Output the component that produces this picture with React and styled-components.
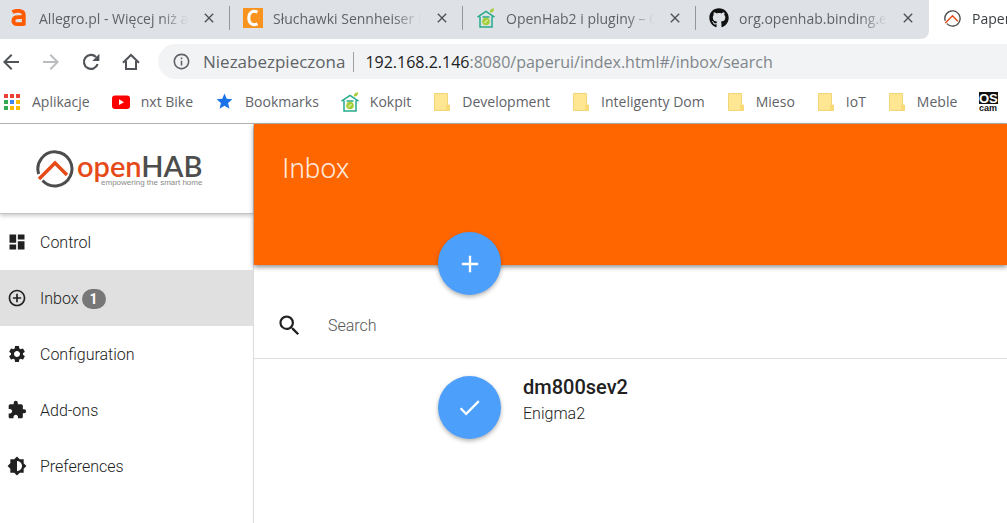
import React, { useState } from 'react'
import styled, { createGlobalStyle } from 'styled-components'
import {
    MdAdd, MdArrowBack, MdArrowForward, MdBrightness6, MdCheck, MdClose,
    MdControlPoint, MdDashboard, MdExtension, MdInfoOutline,
    MdSearch, MdSettings, MdStar
} from 'react-icons/md'
import { FaGithub } from 'react-icons/fa'

const GlobalStyle = createGlobalStyle`
    * {
        box-sizing: border-box;
    }
    body {
        margin: 0;
        background: #fff;
        font-family: Roboto, sans-serif;
        overflow: hidden;
    }
    button {
        border: 0;
        padding: 0;
        background: none;
        font: inherit;
        color: inherit;
    }
    a {
        color: inherit;
        text-decoration: none;
    }
    svg {
        display: block;
        flex: none;
    }
`

/* browser frame */

const Browser = styled.header`
    font-family: 'Open Sans', sans-serif;
    color: #5f6368;
    border-bottom: 1px solid #b4b5b7;
    overflow: hidden;
`

const TabStrip = styled.div`
    display: flex;
    height: 39px;
`

const IdleTabs = styled.div`
    display: flex;
    flex: none;
    background: #dee1e6;
    border-bottom-right-radius: 8px;
`

const Tab = styled.div`
    display: flex;
    align-items: center;
    flex: none;
    width: ${props => props.$first ? '230px' : '233px'};
    height: 36px;
    padding-left: ${props => props.$first ? '9px' : '13px'};
    gap: 10px;
    font-size: 14px;
    color: ${props => props.$active ? '#3c4043' : '#5f6368'};
`

const TabIcon = styled.span`
    display: flex;
    justify-content: center;
    flex: none;
    width: 20px;
`

const TabTitle = styled.span`
    flex: 1;
    min-width: 0;
    overflow: hidden;
    white-space: nowrap;
    mask-image: linear-gradient(to right, #000 80%, transparent 98%);
`

const TabClose = styled.button`
    flex: none;
    margin-right: 2px;
    color: #4d5156;
`

const TabDivider = styled.span`
    flex: none;
    width: 1px;
    height: 24px;
    background: ${props => props.$hidden ? 'transparent' : '#93969b'};
`

const Toolbar = styled.div`
    display: flex;
    align-items: center;
    height: 45px;
    padding-left: 1px;
`

const ToolButton = styled.button`
    display: flex;
    justify-content: center;
    flex: none;
    width: 40px;
    color: ${props => props.disabled ? '#babcbe' : '#505357'};

    &:first-child {
        width: 20px;
        margin-right: 10px;
    }
`

const AddressBar = styled.div`
    display: flex;
    align-items: center;
    flex: 1;
    height: 35px;
    margin-left: 7px;
    padding-left: 14px;
    border-radius: 18px 0 0 18px;
    background: #f1f3f4;
    font-size: 17px;
    white-space: nowrap;
`

const Security = styled.span`
    margin-left: 12px;
    padding-right: 8px;
    border-right: 1px solid #9aa0a6;
    line-height: 20px;
`

const Url = styled.div`
    margin-left: 11px;
    font-size: 16px;
    color: #80868b;
    outline: 0;
`

const Host = styled.span`
    color: #202124;
`

const Bookmarks = styled.nav`
    display: flex;
    gap: 22px;
    height: 39px;
    padding: 0 0 4px 3px;
`

const Bookmark = styled.a`
    display: flex;
    align-items: center;
    flex: none;
    gap: 11px;
    font-size: 14px;
    white-space: nowrap;
`

/* Paper UI page */

const Page = styled.div`
    display: flex;
    min-height: calc(100vh - 124px);
`

const Sidebar = styled.aside`
    flex: none;
    width: 254px;
    border-right: 1px solid #dcdcdc;
`

const Brand = styled.a`
    display: flex;
    align-items: center;
    gap: 3px;
    height: 90px;
    padding-left: 36px;
    border-bottom: 1px solid #c4c4c4;
    box-shadow: 0 2px 4px rgba(0, 0, 0, 0.2);
`

const BrandText = styled.span`
    display: flex;
    flex-direction: column;
    align-items: flex-end;
`

const BrandName = styled.span`
    font-family: Lato, sans-serif;
    font-size: 29px;
    font-weight: 600;
    line-height: 28px;
    color: #4d4d4d;
`

const BrandOpen = styled.span`
    color: #e64a19;
`

const Tagline = styled.span`
    font-family: 'Liberation Sans', sans-serif;
    font-size: 8px;
    line-height: 6px;
    color: #8a8a8a;
`

const Menu = styled.nav`
    display: flex;
    flex-direction: column;
`

const MenuItem = styled.a`
    display: flex;
    align-items: center;
    height: 56px;
    padding-left: 7px;
    gap: 13px;
    font-size: 16px;
    font-weight: 300;
    color: #212121;
    background: ${props => props.$active ? '#e0e0e0' : 'transparent'};
`

const MenuLabel = styled.span`
    display: flex;
    align-items: center;
    gap: 3px;
    padding-top: 1px;
`

const Badge = styled.span`
    min-width: 24px;
    border-radius: 10px;
    background: #777;
    color: #fff;
    font-size: 14px;
    font-weight: bold;
    line-height: 20px;
    text-align: center;
`

const Main = styled.main`
    flex: 1;
    min-width: 0;
`

const Banner = styled.div`
    position: relative;
    height: 141px;
    padding: 28px;
    background: #ff6600;
    box-shadow: 0 2px 5px rgba(0, 0, 0, 0.45);
`

const Title = styled.h1`
    margin: 0;
    font-size: 28px;
    font-weight: 300;
    line-height: 33px;
    color: rgba(255, 255, 255, 0.87);
`

const RoundButton = styled.button`
    display: flex;
    align-items: center;
    justify-content: center;
    flex: none;
    width: 63px;
    height: 63px;
    border-radius: 50%;
    background: #4d9ffc;
    color: #fff;
    box-shadow: 0 2px 4px rgba(0, 0, 0, 0.3);
`

const AddButton = styled(RoundButton)`
    position: absolute;
    left: 184px;
    bottom: -30px;
`

const SearchRow = styled.label`
    display: flex;
    align-items: center;
    height: 94px;
    padding: 28px 24px 0 22px;
    gap: 25px;
    border-bottom: 1px solid #e0e0e0;
    color: #212121;
`

const SearchInput = styled.input`
    flex: 1;
    min-width: 0;
    border: 0;
    padding: 0;
    outline: 0;
    font: 300 16px Roboto, sans-serif;

    &::placeholder {
        color: #555;
        opacity: 1;
    }
`

const Thing = styled.div`
    display: flex;
    padding: 17px 24px 17px 184px;
    gap: 22px;
`

const ThingName = styled.h2`
    margin: 0;
    font-size: 20px;
    font-weight: 500;
    line-height: 22px;
    color: #212121;
`

const ThingType = styled.p`
    margin: 4px 0 0;
    font-size: 16px;
    font-weight: 300;
    line-height: 24px;
    color: #212121;
`

const AllegroIcon = () => (
    <svg width="16" height="18" viewBox="0 0 16 18" fill="none" stroke="#ff5a00" strokeWidth="3.8">
        <path d="M1.5 3.2C5 1.2 12.8 0.8 12.8 6V16.5M12.8 8.2H7C1 8.2 1 15.2 6.2 15.2H12.8" />
    </svg>
)

const CeneoIcon = () => (
    <svg width="20" height="20" viewBox="0 0 20 20">
        <path fill="#f7931e" d="M0 0h20v20H0z" />
        <path fill="none" stroke="#fff" strokeWidth="3" d="M14.5 4.2C9 1.8 5.8 5 5.8 10s3.2 8.2 8.7 5.8" />
    </svg>
)

const SmartHomeIcon = () => (
    <svg width="18" height="20" viewBox="0 0 18 20" fill="none" stroke="#26a98b" strokeWidth="1.5">
        <path d="M.5 9.2L9 3.5l8.5 5.700M3 8.500v10.500h12V8.500M5.500 9h7" />
        <circle cx="9" cy="13.5" r="3.8" fill="#a6ce39" stroke="none" />
        <path stroke="#fff" strokeWidth="1" d="M7.5 15l3-3" />
        <path fill="#a6ce39" stroke="none" d="M13 4.500C12.500 2 14.500.500 17 .300c.200 2.500-1.200 4.500-4 4.200z" />
    </svg>
)

const HabMark = ({ size }) => (
    <svg width={size} height={size} viewBox="0 0 38 38" fill="none">
        <path stroke="#4d4d4d" strokeWidth="3" d="M2.700 24A17 17 0 1 1 6.500 30.500" />
        <path stroke="#e64a19" strokeWidth="3.4" d="M3 29L19 13l12 12" />
    </svg>
)

const ReloadIcon = () => (
    <svg width="18" height="18" viewBox="0 0 18 18">
        <path fill="none" stroke="currentColor" strokeWidth="2.2" d="M15.6 11.200A7 7 0 1 1 14 4" />
        <path fill="currentColor" d="M17.400.8v7.100h-7.100z" />
    </svg>
)

const HomeIcon = () => (
    <svg width="18" height="18" viewBox="0 0 18 18" fill="none" stroke="currentColor" strokeWidth="2">
        <path d="M1 9.800L9 2l8 7.800M4 8v8h10V8" />
    </svg>
)

const AppsIcon = () => {
    const colors = ['#ea4335', '#ea4335', '#ea4335', '#34a853', '#4285f4', '#fbbc05', '#34a853', '#fbbc05', '#fbbc05']
    return (
        <svg width="18" height="18" viewBox="0 0 18 18">
            {colors.map((color, i) => (
                <rect key={i} x={1 + (i % 3) * 6} y={1 + Math.floor(i / 3) * 6} width="4" height="4" fill={color} />
            ))}
        </svg>
    )
}

const YouTubeIcon = () => (
    <svg width="18" height="18" viewBox="0 0 18 18">
        <rect y="2.5" width="18" height="13.5" rx="3" fill="#f00" />
        <path fill="#fff" d="M7 6.300v5.800l5-2.900z" />
    </svg>
)

const FolderIcon = () => (
    <svg width="18" height="18" viewBox="0 0 18 18">
        <path fill="#ffe692" stroke="#f2d675" d="M1.500.5h13v11.500h2v5.500h-15z" />
        <path fill="#f9da74" d="M13 12h3.500v4l-1.500 1.500h-2z" />
    </svg>
)

const OscamIcon = () => (
    <svg width="19" height="20" viewBox="0 0 19 20" fontFamily="Liberation Sans, sans-serif" fontWeight="bold">
        <path fill="#111" d="M0 0h19v12H0z" />
        <text x="0" y="11" fontSize="13" fill="#fff">OS</text>
        <text x="0" y="19" fontSize="9" fill="#111">cam</text>
    </svg>
)

const tabs = [
    { title: 'Allegro.pl - Więcej niż aukcje', icon: <AllegroIcon /> },
    { title: 'Słuchawki Sennheiser PC', icon: <CeneoIcon /> },
    { title: 'OpenHab2 i pluginy – Gdzie', icon: <SmartHomeIcon /> },
    { title: 'org.openhab.binding.enigma2', icon: <FaGithub size={20} color="#111" /> }
]

const bookmarks = [
    { label: 'Aplikacje', icon: <AppsIcon /> },
    { label: 'nxt Bike', icon: <YouTubeIcon /> },
    { label: 'Bookmarks', icon: <MdStar size={19} color="#1a73e8" /> },
    { label: 'Kokpit', icon: <SmartHomeIcon /> },
    { label: 'Development', icon: <FolderIcon /> },
    { label: 'Inteligenty Dom', icon: <FolderIcon /> },
    { label: 'Mieso', icon: <FolderIcon /> },
    { label: 'IoT', icon: <FolderIcon /> },
    { label: 'Meble', icon: <FolderIcon /> },
    { label: '', icon: <OscamIcon /> }
]

const menu = [
    { label: 'Control', icon: MdDashboard },
    { label: 'Inbox', icon: MdControlPoint, count: 1 },
    { label: 'Configuration', icon: MdSettings },
    { label: 'Add-ons', icon: MdExtension },
    { label: 'Preferences', icon: MdBrightness6 }
]

const BrowserBar = () => (
    <Browser>
        <TabStrip>
            <IdleTabs>
                {tabs.map((tab, i) => (
                    <Tab key={tab.title} $first={i === 0}>
                        <TabIcon>{tab.icon}</TabIcon>
                        <TabTitle>{tab.title}</TabTitle>
                        <TabClose aria-label="Zamknij"><MdClose size={16} /></TabClose>
                        <TabDivider $hidden={i === tabs.length - 1} />
                    </Tab>
                ))}
            </IdleTabs>
            <Tab $active>
                <TabIcon><HabMark size={17} /></TabIcon>
                <TabTitle>Paper UI</TabTitle>
            </Tab>
        </TabStrip>
        <Toolbar>
            <ToolButton aria-label="Wstecz"><MdArrowBack size={24} /></ToolButton>
            <ToolButton aria-label="Dalej" disabled><MdArrowForward size={24} /></ToolButton>
            <ToolButton aria-label="Odśwież"><ReloadIcon /></ToolButton>
            <ToolButton aria-label="Strona startowa"><HomeIcon /></ToolButton>
            <AddressBar>
                <MdInfoOutline size={19} />
                <Security>Niezabezpieczona</Security>
                <Url role="textbox" aria-label="Adres" contentEditable suppressContentEditableWarning spellCheck={false}>
                    <Host>192.168.2.146</Host>:8080/paperui/index.html#/inbox/search
                </Url>
            </AddressBar>
        </Toolbar>
        <Bookmarks>
            {bookmarks.map((item, i) => (
                <Bookmark key={i} href="#" aria-label={item.label || 'OSCam'}>
                    {item.icon}
                    {item.label}
                </Bookmark>
            ))}
        </Bookmarks>
    </Browser>
)

const App = () => {
    const [active, setActive] = useState('Inbox')
    const [query, setQuery] = useState('')

    return (
        <>
            <GlobalStyle />
            <BrowserBar />
            <Page>
                <Sidebar>
                    <Brand href="#">
                        <HabMark size={38} />
                        <BrandText>
                            <BrandName><BrandOpen>open</BrandOpen>HAB</BrandName>
                            <Tagline>empowering the smart home</Tagline>
                        </BrandText>
                    </Brand>
                    <Menu>
                        {menu.map(({ label, icon: Icon, count }) => (
                            <MenuItem key={label} href="#" $active={label === active} onClick={() => setActive(label)}>
                                <Icon size={20} />
                                <MenuLabel>
                                    {label}
                                    {count && <Badge>{count}</Badge>}
                                </MenuLabel>
                            </MenuItem>
                        ))}
                    </Menu>
                </Sidebar>
                <Main>
                    <Banner>
                        <Title>Inbox</Title>
                        <AddButton aria-label="Add"><MdAdd size={28} /></AddButton>
                    </Banner>
                    <SearchRow>
                        <MdSearch size={27} />
                        <SearchInput
                            type='text'
                            placeholder='Search'
                            aria-label='Search'
                            value={query}
                            onChange={(event) => setQuery(event.target.value)} />
                    </SearchRow>
                    <Thing>
                        <RoundButton aria-label="Approve"><MdCheck size={27} /></RoundButton>
                        <div>
                            <ThingName>dm800sev2</ThingName>
                            <ThingType>Enigma2</ThingType>
                        </div>
                    </Thing>
                </Main>
            </Page>
        </>
    )
}

export default App
